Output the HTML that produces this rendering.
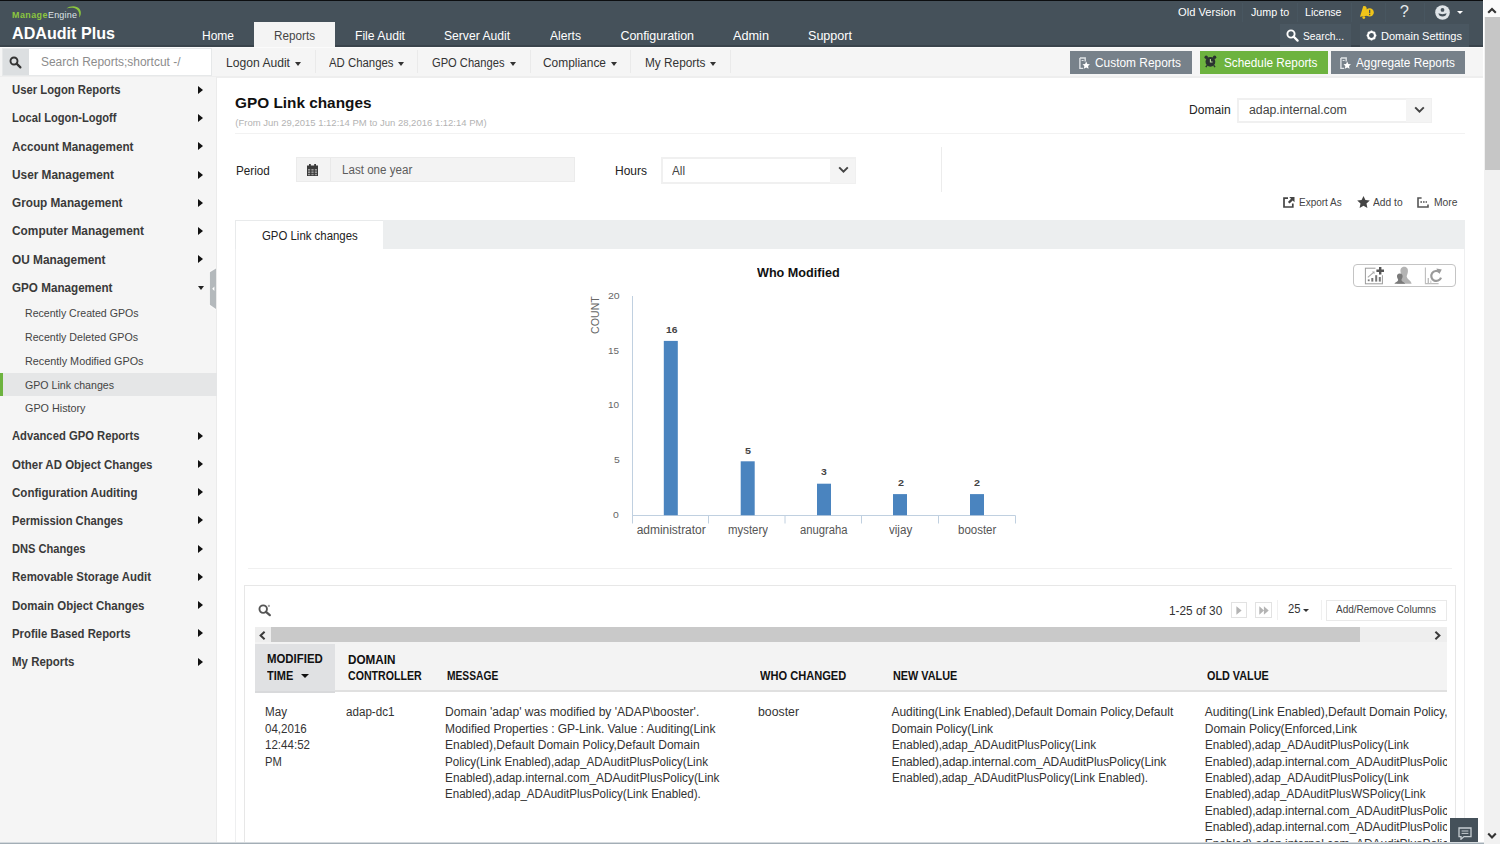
<!DOCTYPE html>
<html lang="en"><head><meta charset="utf-8"><title>ADAudit Plus - GPO Link changes</title>
<style>
*{box-sizing:border-box;margin:0;padding:0}
html,body{width:1500px;height:844px;overflow:hidden;background:#fff}
body{font-family:"Liberation Sans",sans-serif;font-size:12.5px;color:#333;position:relative}
.t{position:absolute;white-space:pre;display:block;transform-origin:0 50%}
.abs{position:absolute}
#topline{left:0;top:0;width:1483px;height:1px;background:#0c0e10}
#header{left:0;top:1px;width:1483px;height:46px;background:#45515a;border-bottom:2px solid #3a444c}
#tab-reports{left:254px;top:22px;width:81px;height:25px;background:#f4f4f4}
.hsep{position:absolute;top:3px;width:1px;height:19px;background:#485660}
.hbox{position:absolute;top:24px;height:23px;background:#4a5761}
#subbar{left:0;top:47px;width:1483px;height:31px;background:#f5f5f5;border-top:1px solid #fbfbfb;border-bottom:2px solid #eeeeee}
.msep{position:absolute;top:50px;width:1px;height:23px;background:#eaeaea}
.caret{position:absolute;width:0;height:0;border-left:3.5px solid transparent;border-right:3.5px solid transparent;border-top:4px solid #333}
.btn{position:absolute;top:51px;height:23px;background:#77818a}
#sidebar{left:0;top:77px;width:217px;height:767px;background:#f5f5f5;border-right:1px solid #ebebeb}
.arrow{position:absolute;left:197.5px;width:0;height:0;border-top:4px solid transparent;border-bottom:4px solid transparent;border-left:5px solid #111}
#vscroll{left:1484px;top:0;width:16px;height:844px;background:#f1f1f1}

.line{position:absolute;background:#f2f2f2}
.box{position:absolute;border:1px solid #e6e6e6;background:#fff}
#tabstrip{left:235px;top:220px;width:1230px;height:29px;background:#eceeef}
#tab-active{left:235px;top:220px;width:147.5px;height:29px;background:#fff;border-top:1px solid #e8eaeb;border-left:1px solid #e8eaeb}
#tablepanel{left:244px;top:585px;width:1212px;height:270px;border:1px solid #e7e7e7;background:#fff}
#hscroll{left:254.5px;top:627px;width:1192px;height:15.5px;background:#eeeeee}
#hthumb{left:271.25px;top:627px;width:1088.5px;height:15.5px;background:#c9c9c9}
#thead{left:254.5px;top:642px;width:1192px;height:50px;background:#f3f3f3;border-bottom:2px solid #e0e0e0}
#thsort{left:254.5px;top:644px;width:80px;height:48.5px;background:#e0e1e3;border-bottom:2px solid #d8d9db}
#oldclip{left:1200px;top:700px;width:1246.5px;height:142px;overflow:hidden}
.pgbtn{position:absolute;top:602px;width:16px;height:16px;border:1px solid #e2e2e2;background:#fff}
</style></head>
<body>
<header>
<div class="abs" id="header"></div><div class="abs" id="topline"></div>
<span class="t" style="left:11.50px;top:9.61px;font-size:8.5px;line-height:11px;color:#8cc63f;font-weight:700;letter-spacing:0.431px;transform:scaleX(1.0500);">Manage</span>
<span class="t" style="left:47.60px;top:9.61px;font-size:8.5px;line-height:11px;color:#dfe4e7;letter-spacing:0.211px;transform:scaleX(1.0500);">Engine</span>
<svg class="abs" style="left:60px;top:4px" width="24" height="16" viewBox="0 0 24 16"><path d="M6.5 4.6 C10 1.6 16.5 1.2 19.6 5 C21.6 8 21 11.5 19.2 13.6 C19.8 10 19 7 16.6 5.2 C13.6 3.2 9.6 3.4 6.5 4.6Z" fill="#8cc63f"/></svg>
<span class="t" style="left:12.00px;top:23.02px;font-size:16.5px;line-height:21px;color:#fff;font-weight:700;transform:scaleX(0.9770);">ADAudit Plus</span>
<div class="abs" id="tab-reports"></div>
<span class="t" style="left:201.50px;top:27.51px;font-size:12.5px;line-height:16px;color:#fff;transform:scaleX(0.9597);">Home</span>
<span class="t" style="left:274.00px;top:27.51px;font-size:12.5px;line-height:16px;color:#444;transform:scaleX(0.9365);">Reports</span>
<span class="t" style="left:355.00px;top:27.51px;font-size:12.5px;line-height:16px;color:#fff;transform:scaleX(0.9723);">File Audit</span>
<span class="t" style="left:444.00px;top:27.51px;font-size:12.5px;line-height:16px;color:#fff;transform:scaleX(0.9693);">Server Audit</span>
<span class="t" style="left:550.00px;top:27.51px;font-size:12.5px;line-height:16px;color:#fff;transform:scaleX(0.9702);">Alerts</span>
<span class="t" style="left:620.50px;top:27.51px;font-size:12.5px;line-height:16px;color:#fff;letter-spacing:-0.072px;">Configuration</span>
<span class="t" style="left:733.00px;top:27.51px;font-size:12.5px;line-height:16px;color:#fff;transform:scaleX(1.0159);">Admin</span>
<span class="t" style="left:808.00px;top:27.51px;font-size:12.5px;line-height:16px;color:#fff;transform:scaleX(1.0050);">Support</span>
<span class="t" style="left:1178.00px;top:5.00px;font-size:11.5px;line-height:15px;color:#fff;transform:scaleX(0.9714);">Old Version</span>
<span class="t" style="left:1250.75px;top:5.00px;font-size:11.5px;line-height:15px;color:#fff;transform:scaleX(0.9347);">Jump to</span>
<span class="t" style="left:1304.50px;top:5.00px;font-size:11.5px;line-height:15px;color:#fff;transform:scaleX(0.9208);">License</span>
<div class="hsep" style="left:1242px"></div>
<div class="hsep" style="left:1297px"></div>
<div class="hsep" style="left:1351px"></div>
<div class="hsep" style="left:1385px"></div>
<div class="hsep" style="left:1424px"></div>
<svg class="abs" style="left:1359px;top:5px" width="16" height="15" viewBox="0 0 16 15"><path d="M4.2 1.2 C6 0.6 7.4 1.4 7.6 3 L8.4 8.8 L9.6 10.6 L1 11.8 L1.6 9.8 Z" fill="#f0c419"/><circle cx="4.8" cy="12.6" r="1.4" fill="#f0c419"/><circle cx="10.6" cy="7.4" r="4.2" fill="#f0c419"/><rect x="10" y="4.8" width="1.3" height="3.4" fill="#45515a"/><rect x="10" y="8.9" width="1.3" height="1.3" fill="#45515a"/></svg>
<span class="t" style="left:1399.80px;top:1.30px;font-size:16.5px;line-height:21px;color:#e3e8eb;">?</span>
<svg class="abs" style="left:1435.25px;top:4.5px" width="15" height="15" viewBox="0 0 15 15"><circle cx="7.5" cy="7.5" r="7.3" fill="#dfe4e8"/><circle cx="7.5" cy="4.9" r="1.9" fill="#45515a"/><path d="M3.5 8 C5 9.5 10 9.5 11.5 8 C11.4 10.6 9.6 11.5 7.5 11.5 C5.4 11.5 3.6 10.6 3.5 8Z" fill="#45515a"/></svg>
<div class="caret" style="left:1456.8px;top:10.6px;border-top-color:#fff;border-left-width:3.4px;border-right-width:3.4px;border-top-width:3.8px"></div>
<div class="hbox" style="left:1280px;width:71px"></div>
<svg class="abs" style="left:1285.5px;top:28.5px" width="13" height="13" viewBox="0 0 13 13"><circle cx="5" cy="5" r="3.6" fill="none" stroke="#fff" stroke-width="1.9"/><path d="M7.6 7.6 L11.6 11.6" stroke="#fff" stroke-width="2.2" stroke-linecap="round"/></svg>
<span class="t" style="left:1302.50px;top:28.80px;font-size:11.5px;line-height:15px;color:#fff;transform:scaleX(0.8907);">Search...</span>
<div class="hbox" style="left:1360px;width:109px"></div>
<svg class="abs" style="left:1365.5px;top:29.5px" width="11" height="11" viewBox="0 0 11 11"><circle cx="5.5" cy="5.5" r="3.5" fill="none" stroke="#fff" stroke-width="2.1"/><g stroke="#fff" stroke-width="1.6"><path d="M5.5 0.6 V1.8 M5.5 9.2 V10.4 M0.6 5.5 H1.8 M9.2 5.5 H10.4 M2 2 L2.9 2.9 M8.1 8.1 L9 9 M2 9 L2.9 8.1 M8.1 2.9 L9 2"/></g></svg>
<span class="t" style="left:1381.00px;top:28.80px;font-size:11.5px;line-height:15px;color:#fff;transform:scaleX(0.9600);">Domain Settings</span>
</header>
<nav>
<div class="abs" id="subbar"></div>
<div class="abs" style="left:2px;top:48px;width:210px;height:28px;background:#e6e8e9"></div>
<div class="abs" style="left:3px;top:49px;width:26px;height:26px;background:#dcdfe1"></div>
<div class="abs" style="left:29px;top:49px;width:182px;height:26px;background:#fff"></div>
<svg class="abs" style="left:9px;top:55.5px" width="13" height="13" viewBox="0 0 13 13"><circle cx="5" cy="5" r="3.5" fill="none" stroke="#333" stroke-width="1.9"/><path d="M7.6 7.6 L11.4 11.4" stroke="#333" stroke-width="2.2" stroke-linecap="round"/></svg>
<span class="t" style="left:40.50px;top:53.60px;font-size:12.5px;line-height:16px;color:#8c8c8c;transform:scaleX(0.9561);">Search Reports;shortcut -/</span>
<span class="t" style="left:226.00px;top:55.01px;font-size:12.5px;line-height:16px;color:#333;transform:scaleX(0.9690);">Logon Audit</span>
<div class="caret" style="left:294.5px;top:62px"></div>
<span class="t" style="left:328.50px;top:55.01px;font-size:12.5px;line-height:16px;color:#333;transform:scaleX(0.9101);">AD Changes</span>
<div class="caret" style="left:398.0px;top:62px"></div>
<span class="t" style="left:431.50px;top:55.01px;font-size:12.5px;line-height:16px;color:#333;transform:scaleX(0.8918);">GPO Changes</span>
<div class="caret" style="left:509.5px;top:62px"></div>
<span class="t" style="left:543.00px;top:55.01px;font-size:12.5px;line-height:16px;color:#333;transform:scaleX(0.9543);">Compliance</span>
<div class="caret" style="left:611.0px;top:62px"></div>
<span class="t" style="left:644.50px;top:55.01px;font-size:12.5px;line-height:16px;color:#333;transform:scaleX(0.9467);">My Reports</span>
<div class="caret" style="left:709.5px;top:62px"></div>
<div class="msep" style="left:315px"></div>
<div class="msep" style="left:417px"></div>
<div class="msep" style="left:530px"></div>
<div class="msep" style="left:630px"></div>
<div class="msep" style="left:730px"></div>
<div class="btn" style="left:1070px;width:122px"></div>
<div class="btn" style="left:1200px;width:128px;background:#6db33f"></div>
<div class="btn" style="left:1331px;width:134px"></div>
<svg class="abs" style="left:1078.8px;top:56.5px" width="11" height="13" viewBox="0 0 11 13"><path d="M0.9 1 H6.2 V4.6 M0.9 1 V11.4 H4.2" fill="none" stroke="#dfe3e6" stroke-width="1.4"/><rect x="2.6" y="3" width="2" height="1" fill="#dfe3e6"/><path d="M7.2 4.6 l1.15 2.4 2.6 .3 -1.9 1.8 .5 2.6 -2.35 -1.3 -2.35 1.3 .5 -2.6 -1.9 -1.8 2.6 -.3z" fill="#fff"/></svg>
<span class="t" style="left:1095.00px;top:55.01px;font-size:12.5px;line-height:16px;color:#fff;transform:scaleX(0.9522);">Custom Reports</span>
<svg class="abs" style="left:1204px;top:55px" width="13" height="13" viewBox="0 0 13 13"><circle cx="6.4" cy="6.8" r="4.9" fill="#2b3330"/><circle cx="2.2" cy="2.2" r="1.7" fill="#2b3330"/><circle cx="10.6" cy="2.2" r="1.7" fill="#2b3330"/><path d="M3 10.4 L1.8 12.2 M9.8 10.4 L11 12.2" stroke="#2b3330" stroke-width="1.4"/><path d="M6.4 4 V7 H8.6" stroke="#b8dc98" stroke-width="1.1" fill="none"/></svg>
<span class="t" style="left:1224.00px;top:55.01px;font-size:12.5px;line-height:16px;color:#fff;transform:scaleX(0.9409);">Schedule Reports</span>
<svg class="abs" style="left:1340px;top:56.5px" width="11" height="13" viewBox="0 0 11 13"><path d="M0.9 1 H6.2 V4.6 M0.9 1 V11.4 H4.2" fill="none" stroke="#dfe3e6" stroke-width="1.4"/><rect x="2.6" y="3" width="2" height="1" fill="#dfe3e6"/><path d="M7.2 4.6 l1.15 2.4 2.6 .3 -1.9 1.8 .5 2.6 -2.35 -1.3 -2.35 1.3 .5 -2.6 -1.9 -1.8 2.6 -.3z" fill="#fff"/></svg>
<span class="t" style="left:1356.00px;top:55.01px;font-size:12.5px;line-height:16px;color:#fff;transform:scaleX(0.9434);">Aggregate Reports</span>
</nav>
<aside>
<div class="abs" id="sidebar"></div>
<span class="t" style="left:12.00px;top:82.01px;font-size:12.5px;line-height:16px;color:#3a3a3a;font-weight:700;transform:scaleX(0.9030);">User Logon Reports</span>
<div class="arrow" style="top:85.5px"></div>
<span class="t" style="left:12.00px;top:110.01px;font-size:12.5px;line-height:16px;color:#3a3a3a;font-weight:700;transform:scaleX(0.8907);">Local Logon-Logoff</span>
<div class="arrow" style="top:113.5px"></div>
<span class="t" style="left:12.00px;top:138.51px;font-size:12.5px;line-height:16px;color:#3a3a3a;font-weight:700;transform:scaleX(0.9354);">Account Management</span>
<div class="arrow" style="top:142px"></div>
<span class="t" style="left:12.00px;top:167.01px;font-size:12.5px;line-height:16px;color:#3a3a3a;font-weight:700;transform:scaleX(0.9472);">User Management</span>
<div class="arrow" style="top:170.5px"></div>
<span class="t" style="left:12.00px;top:195.01px;font-size:12.5px;line-height:16px;color:#3a3a3a;font-weight:700;transform:scaleX(0.9414);">Group Management</span>
<div class="arrow" style="top:198.5px"></div>
<span class="t" style="left:12.00px;top:223.01px;font-size:12.5px;line-height:16px;color:#3a3a3a;font-weight:700;transform:scaleX(0.9503);">Computer Management</span>
<div class="arrow" style="top:226.5px"></div>
<span class="t" style="left:12.00px;top:251.51px;font-size:12.5px;line-height:16px;color:#3a3a3a;font-weight:700;transform:scaleX(0.9479);">OU Management</span>
<div class="arrow" style="top:255px"></div>
<span class="t" style="left:12.00px;top:280.01px;font-size:12.5px;line-height:16px;color:#3a3a3a;font-weight:700;transform:scaleX(0.9334);">GPO Management</span>
<div class="caret" style="left:198px;top:286.2px;border-top-color:#222;border-left-width:3.5px;border-right-width:3.5px;border-top-width:4.5px"></div>
<span class="t" style="left:12.00px;top:428.01px;font-size:12.5px;line-height:16px;color:#3a3a3a;font-weight:700;transform:scaleX(0.8998);">Advanced GPO Reports</span>
<div class="arrow" style="top:431.5px"></div>
<span class="t" style="left:12.00px;top:456.51px;font-size:12.5px;line-height:16px;color:#3a3a3a;font-weight:700;transform:scaleX(0.9180);">Other AD Object Changes</span>
<div class="arrow" style="top:460px"></div>
<span class="t" style="left:12.00px;top:484.51px;font-size:12.5px;line-height:16px;color:#3a3a3a;font-weight:700;transform:scaleX(0.9253);">Configuration Auditing</span>
<div class="arrow" style="top:488px"></div>
<span class="t" style="left:12.00px;top:512.51px;font-size:12.5px;line-height:16px;color:#3a3a3a;font-weight:700;transform:scaleX(0.8976);">Permission Changes</span>
<div class="arrow" style="top:516px"></div>
<span class="t" style="left:12.00px;top:541.01px;font-size:12.5px;line-height:16px;color:#3a3a3a;font-weight:700;transform:scaleX(0.8892);">DNS Changes</span>
<div class="arrow" style="top:544.5px"></div>
<span class="t" style="left:12.00px;top:569.01px;font-size:12.5px;line-height:16px;color:#3a3a3a;font-weight:700;transform:scaleX(0.9165);">Removable Storage Audit</span>
<div class="arrow" style="top:572.5px"></div>
<span class="t" style="left:12.00px;top:597.51px;font-size:12.5px;line-height:16px;color:#3a3a3a;font-weight:700;transform:scaleX(0.9171);">Domain Object Changes</span>
<div class="arrow" style="top:601px"></div>
<span class="t" style="left:12.00px;top:625.51px;font-size:12.5px;line-height:16px;color:#3a3a3a;font-weight:700;transform:scaleX(0.9074);">Profile Based Reports</span>
<div class="arrow" style="top:629px"></div>
<span class="t" style="left:12.00px;top:654.01px;font-size:12.5px;line-height:16px;color:#3a3a3a;font-weight:700;transform:scaleX(0.9181);">My Reports</span>
<div class="arrow" style="top:657.5px"></div>
<div class="abs" style="left:0;top:373px;width:217px;height:22.5px;background:#e5e6e7;border-left:3px solid #6db33f"></div>
<span class="t" style="left:25.00px;top:306.00px;font-size:11.5px;line-height:15px;color:#444;transform:scaleX(0.9201);">Recently Created GPOs</span>
<span class="t" style="left:25.00px;top:330.00px;font-size:11.5px;line-height:15px;color:#444;transform:scaleX(0.9255);">Recently Deleted GPOs</span>
<span class="t" style="left:25.00px;top:353.50px;font-size:11.5px;line-height:15px;color:#444;transform:scaleX(0.9411);">Recently Modified GPOs</span>
<span class="t" style="left:25.00px;top:377.50px;font-size:11.5px;line-height:15px;color:#444;transform:scaleX(0.9220);">GPO Link changes</span>
<span class="t" style="left:25.00px;top:401.00px;font-size:11.5px;line-height:15px;color:#444;transform:scaleX(0.9373);">GPO History</span>
<svg class="abs" style="left:209px;top:266.5px" width="8" height="44" viewBox="0 0 8 44"><path d="M7 0 L0 4.6 V38.6 L7 43.4 Z" fill="#f9f9f9"/><path d="M7 1.4 L0.9 5.2 V37.8 L7 42 Z" fill="#b4b9bc"/><path d="M5.4 19.4 L3.2 21.7 L5.4 24 Z" fill="#fff"/></svg>
</aside>
<main>
<span class="t" style="left:235.25px;top:92.51px;font-size:15px;line-height:20px;color:#111;font-weight:700;transform:scaleX(1.0234);">GPO Link changes</span>
<span class="t" style="left:235.25px;top:116.51px;font-size:9.5px;line-height:12px;color:#b3b3b3;">(From Jun 29,2015 1:12:14 PM to Jun 28,2016 1:12:14 PM)</span>
<div class="line" style="left:235px;top:133px;width:1230px;height:1px"></div>
<span class="t" style="left:1189.40px;top:102.41px;font-size:12.5px;line-height:16px;color:#222;transform:scaleX(0.9657);">Domain</span>
<div class="box" style="left:1237px;top:97.5px;width:195px;height:25.5px;border:2px solid #f0f0f0"></div>
<div class="abs" style="left:1406px;top:99px;width:25px;height:23px;background:#f4f4f4"></div>
<span class="t" style="left:1248.50px;top:102.41px;font-size:12.5px;line-height:16px;color:#444;transform:scaleX(0.9842);">adap.internal.com</span>
<svg class="abs" style="left:1413.7px;top:106px" width="11" height="8" viewBox="0 0 11 8"><path d="M1.2 1.4 L5.5 5.6 L9.8 1.4" fill="none" stroke="#444" stroke-width="2"/></svg>
<span class="t" style="left:235.50px;top:162.51px;font-size:12.5px;line-height:16px;color:#222;transform:scaleX(0.9339);">Period</span>
<div class="box" style="left:296px;top:157px;width:279px;height:25px;background:#f3f3f3;border-color:#ebebeb"></div>
<div class="abs" style="left:330px;top:158px;width:1px;height:23px;background:#e9e9e9"></div>
<svg class="abs" style="left:307px;top:163.5px" width="11" height="12" viewBox="0 0 11 12"><rect x="0" y="1.5" width="11" height="10.5" fill="#3a3a3a"/><rect x="2" y="0" width="1.8" height="3" fill="#3a3a3a"/><rect x="7.2" y="0" width="1.8" height="3" fill="#3a3a3a"/><g fill="#9a9a9a"><rect x="1" y="5" width="2.2" height="1.6"/><rect x="4.4" y="5" width="2.2" height="1.6"/><rect x="7.8" y="5" width="2.2" height="1.6"/><rect x="1" y="7.4" width="2.2" height="1.6"/><rect x="4.4" y="7.4" width="2.2" height="1.6"/><rect x="7.8" y="7.4" width="2.2" height="1.6"/><rect x="1" y="9.8" width="2.2" height="1.4"/><rect x="4.4" y="9.8" width="2.2" height="1.4"/><rect x="7.8" y="9.8" width="2.2" height="1.4"/></g></svg>
<span class="t" style="left:341.50px;top:162.01px;font-size:12.5px;line-height:16px;color:#5c5c5c;transform:scaleX(0.9274);">Last one year</span>
<span class="t" style="left:614.75px;top:162.51px;font-size:12.5px;line-height:16px;color:#222;transform:scaleX(0.9597);">Hours</span>
<div class="box" style="left:661px;top:157px;width:195px;height:26.5px;border:2px solid #f0f0f0"></div>
<div class="abs" style="left:830px;top:158.5px;width:25px;height:24px;background:#f4f4f4"></div>
<span class="t" style="left:672.25px;top:162.51px;font-size:12.5px;line-height:16px;color:#444;transform:scaleX(0.9348);">All</span>
<svg class="abs" style="left:837.7px;top:165.5px" width="11" height="8" viewBox="0 0 11 8"><path d="M1.2 1.4 L5.5 5.6 L9.8 1.4" fill="none" stroke="#444" stroke-width="2"/></svg>
<div class="line" style="left:941px;top:147px;width:1px;height:45px;background:#ececec"></div>
<svg class="abs" style="left:1282.5px;top:197px" width="12" height="11" viewBox="0 0 12 11"><path d="M5 1.2 H1 V10 H9.8 V6.5" fill="none" stroke="#444" stroke-width="1.7"/><path d="M6.2 0 H11.5 V5.3 L9.7 3.5 L6.6 6.6 L4.9 4.9 L8 1.8 Z" fill="#444"/></svg>
<span class="t" style="left:1299.00px;top:194.61px;font-size:10.5px;line-height:14px;color:#444;transform:scaleX(0.9521);">Export As</span>
<svg class="abs" style="left:1356.5px;top:195.8px" width="13" height="12" viewBox="0 0 13 12"><path d="M6.5 0 L8.4 4 L12.8 4.5 L9.5 7.5 L10.4 11.9 L6.5 9.7 L2.6 11.9 L3.5 7.5 L0.2 4.5 L4.6 4 Z" fill="#444"/></svg>
<span class="t" style="left:1373.00px;top:194.61px;font-size:10.5px;line-height:14px;color:#444;transform:scaleX(0.9750);">Add to</span>
<svg class="abs" style="left:1416.5px;top:197px" width="12" height="11" viewBox="0 0 12 11"><path d="M4.6 1 H1 V10 H11 V7.4" fill="none" stroke="#555" stroke-width="1.6"/><path d="M3.4 5 H10" stroke="#555" stroke-width="1.3" stroke-dasharray="1.6 1"/></svg>
<span class="t" style="left:1433.80px;top:194.61px;font-size:10.5px;line-height:14px;color:#444;transform:scaleX(0.9817);">More</span>
<div class="abs" id="tabstrip"></div><div class="abs" id="tab-active"></div>
<div class="line" style="left:235px;top:249px;width:1px;height:595px;background:#eeeff0"></div>
<div class="line" style="left:1464px;top:249px;width:1px;height:595px;background:#eeeff0"></div>
<span class="t" style="left:261.50px;top:227.51px;font-size:12.5px;line-height:16px;color:#222;transform:scaleX(0.9126);">GPO Link changes</span>
<div class="abs" style="left:1352.5px;top:264px;width:103.5px;height:23px;border:1px solid #c4c4c4;border-radius:4px;background:#fff"></div>
<svg class="abs" style="left:1345px;top:258px" width="120" height="36" viewBox="1345 258 120 36"><rect x="1365.4" y="268.2" width="17" height="15.6" fill="none" stroke="#9c9c9c" stroke-width="1"/><rect x="1375.5" y="266" width="9.5" height="9.2" fill="#fff"/><path d="M1367.8 277.4 L1373.6 272.4" stroke="#a8a8a8" stroke-width="1.1" fill="none"/><path d="M1372 271.6 L1374.6 271.6 L1374.4 274.2 Z" fill="#a8a8a8"/><rect x="1367.8" y="279.4" width="1.8" height="1.8" fill="#777"/><rect x="1371.3" y="278" width="2" height="3.6" fill="#777"/><rect x="1375.2" y="275.2" width="2" height="6.4" fill="#777"/><rect x="1378.8" y="277" width="2" height="4.6" fill="#777"/><path d="M1380.2 267 V274.6 M1376.4 270.8 H1384" stroke="#555" stroke-width="2.4" fill="none"/><path d="M1404.2 266.8 C1407.2 266.8 1408.2 269.2 1407.9 271.8 C1407.7 273.8 1406.8 275.2 1406.7 276.6 C1407.3 279.8 1411 280.4 1411.6 283.8 H1397 C1397.4 280.4 1401.2 279.8 1401.7 276.6 C1401.6 275.2 1400.7 273.8 1400.5 271.8 C1400.2 269.2 1401.2 266.8 1404.2 266.8Z" fill="#b4b4b4"/><path d="M1399.8 273.4 C1402 273.4 1402.8 275 1402.6 276.8 C1402.4 278.2 1401.6 279 1401.4 280 C1401.8 282 1404.6 282.2 1405.2 283.8 H1394.4 C1395 282.2 1397.8 282 1398.2 280 C1398 279 1397.2 278.2 1397 276.8 C1396.8 275 1397.6 273.4 1399.8 273.4Z" fill="#7a7a7a"/><path d="M1425.4 267.6 V283.6 H1438.6" stroke="#bdbdbd" stroke-width="1.1" fill="none"/><rect x="1427.6" y="278" width="1.4" height="5.4" fill="#bdbdbd"/><rect x="1430.2" y="280.6" width="1.2" height="2.8" fill="#cfcfcf"/><path d="M1439.6 272.2 A5 5 0 1 0 1441 277.6" fill="none" stroke="#9a9a9a" stroke-width="2.2"/><path d="M1436.4 268.4 L1441.8 269.4 L1439.4 274 Z" fill="#9a9a9a"/></svg>
<span class="t" style="left:757.30px;top:265.01px;font-size:12.5px;line-height:16px;color:#111;font-weight:700;transform:scaleX(1.0095);">Who Modified</span>
<svg class="abs" style="left:560px;top:290px" width="480" height="240" viewBox="560 290 480 240"><path d="M632.5 296 V523.5 M632 515.5 H1015.5 M708.5 515.5 V523.5 M785 515.5 V523.5 M861.5 515.5 V523.5 M938.5 515.5 V523.5 M1015.5 515.5 V523.5" fill="none" stroke="#c0d0e0" stroke-width="1"/><rect x="663.8" y="340.9" width="14" height="174.3" fill="#4a84bf"/><rect x="740.7" y="461.3" width="14" height="53.9" fill="#4a84bf"/><rect x="817" y="483.7" width="14" height="31.5" fill="#4a84bf"/><rect x="893" y="494.1" width="14" height="21.1" fill="#4a84bf"/><rect x="970" y="494.1" width="14" height="21.1" fill="#4a84bf"/></svg>
<span class="t" style="left:607.80px;top:289.81px;font-size:9.5px;line-height:12px;color:#666;transform:scaleX(1.1061);">20</span>
<span class="t" style="left:608.20px;top:344.51px;font-size:9.5px;line-height:12px;color:#666;transform:scaleX(1.0399);">15</span>
<span class="t" style="left:608.20px;top:399.11px;font-size:9.5px;line-height:12px;color:#666;transform:scaleX(1.0493);">10</span>
<span class="t" style="left:613.60px;top:453.70px;font-size:9.5px;line-height:12px;color:#666;transform:scaleX(1.0950);">5</span>
<span class="t" style="left:613.40px;top:509.01px;font-size:9.5px;line-height:12px;color:#666;transform:scaleX(1.0950);">0</span>
<span class="t" style="left:665.90px;top:324.20px;font-size:9.5px;line-height:12px;color:#444;font-weight:700;transform:scaleX(1.0871);">16</span>
<span class="t" style="left:745.40px;top:444.81px;font-size:9.5px;line-height:12px;color:#444;font-weight:700;transform:scaleX(1.1327);">5</span>
<span class="t" style="left:821.40px;top:466.20px;font-size:9.5px;line-height:12px;color:#444;font-weight:700;transform:scaleX(1.0950);">3</span>
<span class="t" style="left:897.60px;top:477.40px;font-size:9.5px;line-height:12px;color:#444;font-weight:700;transform:scaleX(1.1327);">2</span>
<span class="t" style="left:974.40px;top:477.40px;font-size:9.5px;line-height:12px;color:#444;font-weight:700;transform:scaleX(1.1327);">2</span>
<span class="t" style="left:636.70px;top:522.01px;font-size:12px;line-height:16px;color:#555;letter-spacing:-0.030px;">administrator</span>
<span class="t" style="left:727.70px;top:522.01px;font-size:12px;line-height:16px;color:#555;transform:scaleX(0.9500);">mystery</span>
<span class="t" style="left:800.00px;top:522.01px;font-size:12px;line-height:16px;color:#555;transform:scaleX(0.9385);">anugraha</span>
<span class="t" style="left:888.80px;top:522.01px;font-size:12px;line-height:16px;color:#555;transform:scaleX(0.9660);">vijay</span>
<span class="t" style="left:957.50px;top:522.01px;font-size:12px;line-height:16px;color:#555;transform:scaleX(0.9568);">booster</span>
<div class="abs" style="left:588.7px;top:295.6px;width:13px;height:38px"><span style="position:absolute;left:0;top:38px;transform-origin:0 0;transform:rotate(-90deg);font-size:10.5px;line-height:13px;letter-spacing:0.1px;color:#666;white-space:pre;display:block;width:38px">COUNT</span></div>
<div class="line" style="left:248px;top:568px;width:1204px;height:1px;background:#f0f0f0"></div>
<div class="abs" id="tablepanel"></div>
<svg class="abs" style="left:257.5px;top:604px" width="13" height="13" viewBox="0 0 13 13"><circle cx="5.2" cy="5.1" r="3.75" fill="none" stroke="#555" stroke-width="1.9"/><path d="M8 7.9 L11.8 11.2" stroke="#555" stroke-width="2.2" stroke-linecap="round"/><path d="M10.9 0.8 V3 M9.8 1.9 H12" stroke="#8a8a8a" stroke-width="0.9"/></svg>
<span class="t" style="left:1168.80px;top:603.10px;font-size:12.5px;line-height:16px;color:#333;transform:scaleX(0.9450);">1-25 of 30</span>
<div class="pgbtn" style="left:1231px"></div><div class="pgbtn" style="left:1255px;width:16.5px"></div>
<svg class="abs" style="left:1236.4px;top:605.8px" width="6" height="9" viewBox="0 0 6 9"><path d="M0.4 0.2 L5.6 4.5 L0.4 8.8Z" fill="#b4b4b4"/></svg>
<svg class="abs" style="left:1258.6px;top:605.8px" width="10" height="9" viewBox="0 0 10 9"><path d="M0.3 0.2 L5 4.5 L0.3 8.8Z M4.9 0.2 L9.7 4.5 L4.9 8.8Z" fill="#b4b4b4"/></svg>
<div class="line" style="left:1276.5px;top:600px;width:1px;height:20px;background:#f0f0f0"></div>
<span class="t" style="left:1287.70px;top:601.10px;font-size:12.5px;line-height:16px;color:#333;transform:scaleX(0.8989);">25</span>
<div class="caret" style="left:1303.3px;top:608.5px;border-left-width:3px;border-right-width:3px;border-top-width:3.5px"></div>
<div class="line" style="left:1321px;top:600px;width:1px;height:20px;background:#f0f0f0"></div>
<div class="box" style="left:1326px;top:600px;width:120.5px;height:21px;border-color:#e9e9e9"></div>
<span class="t" style="left:1336.10px;top:601.91px;font-size:10.5px;line-height:14px;color:#444;transform:scaleX(0.9529);">Add/Remove Columns</span>
<div class="abs" id="hscroll"></div><div class="abs" id="hthumb"></div>
<svg class="abs" style="left:259px;top:630.5px" width="7" height="9" viewBox="0 0 7 9"><path d="M5.6 0.8 L1.6 4.5 L5.6 8.2" fill="none" stroke="#3a3a3a" stroke-width="2"/></svg>
<svg class="abs" style="left:1433.5px;top:630.5px" width="7" height="9" viewBox="0 0 7 9"><path d="M1.4 0.8 L5.4 4.5 L1.4 8.2" fill="none" stroke="#3a3a3a" stroke-width="2"/></svg>
<div class="abs" id="thead"></div><div class="abs" id="thsort"></div>
<span class="t" style="left:266.75px;top:651.01px;font-size:12px;line-height:16px;color:#111;font-weight:700;transform:scaleX(0.9502);">MODIFIED</span>
<span class="t" style="left:266.75px;top:667.51px;font-size:12px;line-height:16px;color:#111;font-weight:700;transform:scaleX(0.9155);">TIME</span>
<span class="t" style="left:347.50px;top:651.76px;font-size:12px;line-height:16px;color:#111;font-weight:700;transform:scaleX(0.9759);">DOMAIN</span>
<span class="t" style="left:347.50px;top:668.01px;font-size:12px;line-height:16px;color:#111;font-weight:700;transform:scaleX(0.8851);">CONTROLLER</span>
<span class="t" style="left:446.75px;top:668.01px;font-size:12px;line-height:16px;color:#111;font-weight:700;transform:scaleX(0.8539);">MESSAGE</span>
<span class="t" style="left:760.00px;top:668.01px;font-size:12px;line-height:16px;color:#111;font-weight:700;transform:scaleX(0.9242);">WHO CHANGED</span>
<span class="t" style="left:893.25px;top:668.01px;font-size:12px;line-height:16px;color:#111;font-weight:700;transform:scaleX(0.9035);">NEW VALUE</span>
<span class="t" style="left:1206.60px;top:668.01px;font-size:12px;line-height:16px;color:#111;font-weight:700;transform:scaleX(0.9013);">OLD VALUE</span>
<div class="caret" style="left:300.6px;top:673.8px;border-left-width:4.2px;border-right-width:4.2px;border-top-width:4.4px;border-top-color:#111"></div>
<span class="t" style="left:265.00px;top:704.26px;font-size:12px;line-height:16px;color:#333;transform:scaleX(0.9704);">May</span>
<span class="t" style="left:265.00px;top:720.51px;font-size:12px;line-height:16px;color:#333;transform:scaleX(0.9622);">04,2016</span>
<span class="t" style="left:265.00px;top:737.01px;font-size:12px;line-height:16px;color:#333;transform:scaleX(0.9632);">12:44:52</span>
<span class="t" style="left:265.00px;top:753.51px;font-size:12px;line-height:16px;color:#333;transform:scaleX(0.9306);">PM</span>
<span class="t" style="left:345.75px;top:704.26px;font-size:12px;line-height:16px;color:#333;transform:scaleX(0.9691);">adap-dc1</span>
<span class="t" style="left:445.00px;top:704.26px;font-size:12px;line-height:16px;color:#333;transform:scaleX(1.0064);">Domain 'adap' was modified by 'ADAP\booster'.</span>
<span class="t" style="left:445.00px;top:720.51px;font-size:12px;line-height:16px;color:#333;letter-spacing:-0.028px;">Modified Properties : GP-Link. Value : Auditing(Link</span>
<span class="t" style="left:445.00px;top:737.01px;font-size:12px;line-height:16px;color:#333;">Enabled),Default Domain Policy,Default Domain</span>
<span class="t" style="left:445.00px;top:753.51px;font-size:12px;line-height:16px;color:#333;transform:scaleX(0.9687);">Policy(Link Enabled),adap_ADAuditPlusPolicy(Link</span>
<span class="t" style="left:445.00px;top:770.01px;font-size:12px;line-height:16px;color:#333;transform:scaleX(0.9845);">Enabled),adap.internal.com_ADAuditPlusPolicy(Link</span>
<span class="t" style="left:445.00px;top:786.26px;font-size:12px;line-height:16px;color:#333;transform:scaleX(0.9657);">Enabled),adap_ADAuditPlusPolicy(Link Enabled).</span>
<span class="t" style="left:758.25px;top:704.26px;font-size:12px;line-height:16px;color:#333;transform:scaleX(1.0242);">booster</span>
<span class="t" style="left:891.50px;top:704.26px;font-size:12px;line-height:16px;color:#333;letter-spacing:-0.038px;">Auditing(Link Enabled),Default Domain Policy,</span>
<span class="t" style="left:1135.40px;top:704.26px;font-size:12px;line-height:16px;color:#333;transform:scaleX(1.0097);">Default</span>
<span class="t" style="left:891.50px;top:720.51px;font-size:12px;line-height:16px;color:#333;letter-spacing:-0.071px;">Domain Policy(Link</span>
<span class="t" style="left:891.50px;top:737.01px;font-size:12px;line-height:16px;color:#333;transform:scaleX(0.9709);">Enabled),adap_ADAuditPlusPolicy(Link</span>
<span class="t" style="left:891.50px;top:753.51px;font-size:12px;line-height:16px;color:#333;letter-spacing:-0.085px;">Enabled),adap.internal.com_ADAuditPlusPolicy(Link</span>
<span class="t" style="left:891.50px;top:770.01px;font-size:12px;line-height:16px;color:#333;transform:scaleX(0.9667);">Enabled),adap_ADAuditPlusPolicy(Link Enabled).</span>
<div class="abs" style="left:0;top:0;width:1446.5px;height:842px;overflow:hidden;pointer-events:none">
<span class="t" style="left:1204.80px;top:704.26px;font-size:12px;line-height:16px;color:#333;letter-spacing:-0.038px;">Auditing(Link Enabled),Default Domain Policy,</span>
<span class="t" style="left:1448.70px;top:704.26px;font-size:12px;line-height:16px;color:#333;transform:scaleX(1.0097);">Default</span>
<span class="t" style="left:1204.80px;top:720.51px;font-size:12px;line-height:16px;color:#333;letter-spacing:-0.072px;">Domain Policy(Enforced,Link</span>
<span class="t" style="left:1204.80px;top:737.01px;font-size:12px;line-height:16px;color:#333;transform:scaleX(0.9704);">Enabled),adap_ADAuditPlusPolicy(Link</span>
<span class="t" style="left:1204.80px;top:753.51px;font-size:12px;line-height:16px;color:#333;letter-spacing:-0.081px;">Enabled),adap.internal.com_ADAuditPlusPolicy(Link</span>
<span class="t" style="left:1204.80px;top:770.01px;font-size:12px;line-height:16px;color:#333;transform:scaleX(0.9704);">Enabled),adap_ADAuditPlusPolicy(Link</span>
<span class="t" style="left:1204.80px;top:786.26px;font-size:12px;line-height:16px;color:#333;transform:scaleX(0.9610);">Enabled),adap_ADAuditPlusWSPolicy(Link</span>
<span class="t" style="left:1204.80px;top:802.76px;font-size:12px;line-height:16px;color:#333;letter-spacing:-0.081px;">Enabled),adap.internal.com_ADAuditPlusPolicy(Link</span>
<span class="t" style="left:1204.80px;top:819.01px;font-size:12px;line-height:16px;color:#333;letter-spacing:-0.081px;">Enabled),adap.internal.com_ADAuditPlusPolicy(Link</span>
<span class="t" style="left:1204.80px;top:835.51px;font-size:12px;line-height:16px;color:#333;letter-spacing:-0.081px;">Enabled),adap.internal.com_ADAuditPlusPolicy(Link</span>
</div>
<div class="abs" style="left:1450px;top:818px;width:28px;height:26px;background:#45515a"></div>
<svg class="abs" style="left:1458px;top:826.8px" width="14" height="13" viewBox="0 0 14 13"><path d="M1 1 H13 V9.6 H6 L3 12.2 V9.6 H1 Z" fill="none" stroke="#c6cdd2" stroke-width="1.3"/><path d="M3.6 4 H10.4 M3.6 6.4 H10.4" stroke="#c6cdd2" stroke-width="1"/></svg>
</main>
<div class="abs" id="vscroll"></div>
<div class="abs" style="left:1485px;top:17px;width:15px;height:153px;background:#c6c6c6"></div>
<div class="abs" style="left:1484px;top:0;width:16px;height:17px;background:#fafafa"></div>
<svg class="abs" style="left:1483px;top:0" width="17" height="17" viewBox="0 0 17 17"><path d="M5.2 12.8 L9 9 L12.8 12.8" fill="none" stroke="#333" stroke-width="2.1"/></svg>
<svg class="abs" style="left:1483px;top:827px" width="17" height="17" viewBox="0 0 17 17"><path d="M5.2 6.6 L9 10.4 L12.8 6.6" fill="none" stroke="#333" stroke-width="2.1"/></svg>
<div class="abs" style="left:0;top:842px;width:1484px;height:2px;background:#a3aeb6;border-top:1px solid #d5dade"></div>
</body></html>
